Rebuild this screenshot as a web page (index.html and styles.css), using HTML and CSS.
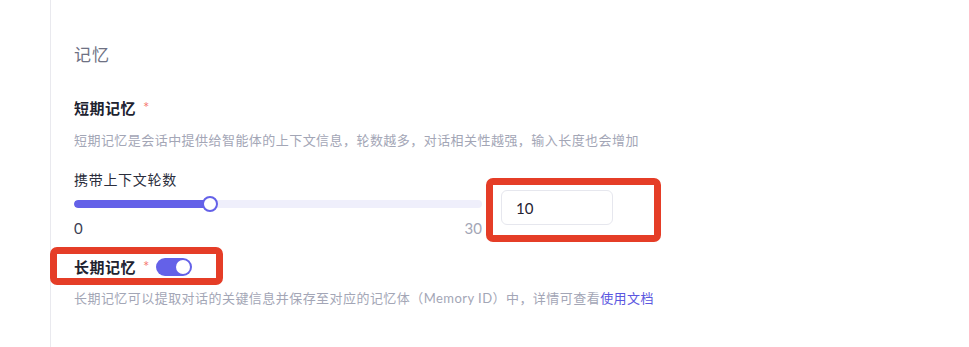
FILE: index.html
```html
<!DOCTYPE html>
<html lang="zh">
<head>
<meta charset="utf-8">
<link rel="stylesheet" href="styles.css">
</head>
<body>
<div class="panel">
  <div class="section-title">记忆</div>

  <div class="field-label">短期记忆<span class="req">*</span></div>
  <div class="desc">短期记忆是会话中提供给智能体的上下文信息，轮数越多，对话相关性越强，输入长度也会增加</div>

  <div class="sub-label">携带上下文轮数</div>
  <div class="slider-row">
    <div class="slider-col">
      <div class="slider">
        <div class="track">
          <div class="fill" style="width:33.33%"></div>
        </div>
        <div class="handle" style="left:33.33%"></div>
      </div>
      <div class="marks"><span class="mark-min">0</span><span class="mark-max">30</span></div>
    </div>
    <div class="input-wrap annot-input">
      <input class="num-input" type="text" value="10">
    </div>
  </div>

  <div class="long-row annot-long">
    <span class="field-label inline">长期记忆<span class="req">*</span></span>
    <span class="toggle"><span class="knob"></span></span>
  </div>
  <div class="desc desc-long">长期记忆可以提取对话的关键信息并保存至对应的记忆体（Memory ID）中，详情可查看<a class="link" href="#">使用文档</a></div>
</div>
</body>
</html>
```
FILE: styles.css
```css
* { box-sizing: border-box; }
html, body {
  margin: 0;
  padding: 0;
  background: #ffffff;
  font-family: Lato, "Noto Sans CJK SC", sans-serif;
}
.panel {
  margin-left: 50px;
  border-left: 1px solid #e9e9ee;
  padding: 43px 0 0 23px;
  height: 347px;
}
.section-title {
  font-size: 17px;
  line-height: 24px;
  color: #6e7183;
  letter-spacing: 1px;
}
.field-label {
  margin-top: 30px;
  font-size: 15px;
  line-height: 22px;
  font-weight: 700;
  color: #20222f;
  letter-spacing: 0.5px;
  display: flex;
  align-items: center;
}
.field-label.inline {
  margin-top: 0;
  display: inline-flex;
}
.req {
  color: #f57a6f;
  font-size: 15px;
  line-height: 22px;
  font-weight: 400;
  margin-left: 7px;
  position: relative;
  top: -1px;
}
.desc {
  margin-top: 11px;
  font-size: 13px;
  line-height: 20px;
  color: #a3a6b6;
  letter-spacing: 0.45px;
}
.sub-label {
  margin-top: 20px;
  font-size: 14px;
  line-height: 20px;
  color: #2b2e3c;
  letter-spacing: 0.7px;
}
.slider-row {
  display: flex;
  align-items: flex-start;
  gap: 19px;
}
.slider-col {
  width: 408px;
}
.slider {
  position: relative;
  height: 28px;
  display: flex;
  align-items: center;
}
.track {
  width: 100%;
  height: 8px;
  border-radius: 4px;
  background: #efeffb;
  overflow: hidden;
}
.fill {
  height: 100%;
  background: #6461e8;
  border-radius: 4px;
}
.handle {
  position: absolute;
  top: 6px;
  width: 16px;
  height: 16px;
  margin-left: -8px;
  border-radius: 50%;
  background: #fff;
  border: 2px solid #6461e8;
}
.marks {
  display: flex;
  justify-content: space-between;
  font-size: 15px;
  line-height: 20px;
}
.mark-min { color: #3c4054; }
.mark-max { color: #a3a6b6; }
.input-wrap {
  position: relative;
}
.num-input {
  width: 112px;
  height: 35px;
  border: 1px solid #e6e7ee;
  border-radius: 6px;
  padding: 0 14px;
  font-family: Lato, "Noto Sans CJK SC", sans-serif;
  font-size: 15px;
  color: #1f2232;
  outline: none;
  background: #fff;
}
.annot-input::after {
  content: "";
  position: absolute;
  top: -12px;
  left: -15px;
  right: -48px;
  bottom: -17px;
  border: 7px solid #e53d27;
  border-radius: 7px;
  pointer-events: none;
}
.long-row {
  position: relative;
  margin-top: 19px;
  display: inline-flex;
  align-items: center;
  height: 20px;
}
.annot-long::after {
  content: "";
  position: absolute;
  top: -10px;
  left: -24px;
  right: -31px;
  bottom: -8px;
  border: 7px solid #e53d27;
  border-radius: 7px;
  pointer-events: none;
}
.toggle {
  margin-left: 6px;
  width: 36px;
  height: 18px;
  border-radius: 9px;
  background: #6461e8;
  display: inline-flex;
  align-items: center;
  justify-content: flex-end;
  padding: 0 2px;
}
.knob {
  width: 14px;
  height: 14px;
  border-radius: 50%;
  background: #fff;
}
.desc-long {
  margin-top: 11px;
}
.link {
  color: #5b57e0;
  text-decoration: none;
}
```
